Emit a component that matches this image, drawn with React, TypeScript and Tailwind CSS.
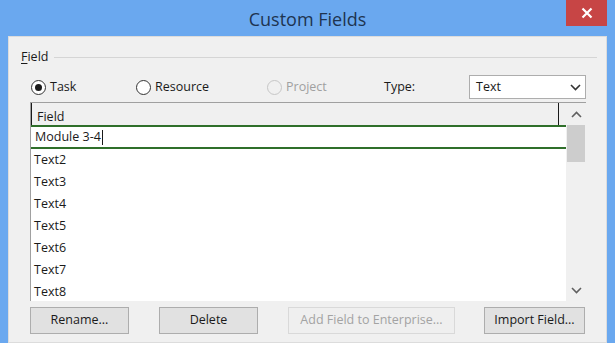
import React from 'react';

const font = { fontFamily: '"Open Sans", "Noto Sans", "Liberation Sans", sans-serif' };

const rows = ['Text2', 'Text3', 'Text4', 'Text5', 'Text6', 'Text7', 'Text8'];

const Radio = (props: { checked?: boolean; disabled?: boolean; label: string; className?: string }) => (
  <div className={`flex items-center gap-[4px] ${props.className ?? ''}`}>
    <div
      className={`w-[15px] h-[15px] rounded-full border flex items-center justify-center ${
        props.disabled ? 'border-[#c6c6c6] bg-[#f0f0f0]' : 'border-[#333333] bg-white'
      }`}
    >
      {props.checked && <div className="w-[7px] h-[7px] rounded-full bg-[#1a1a1a]" />}
    </div>
    <span className={props.disabled ? 'text-[#a0a0a0]' : 'text-[#1a1a1a]'}>{props.label}</span>
  </div>
);

const Button = (props: { label: string; width: string; disabled?: boolean }) => (
  <div
    className={`h-[27px] ${props.width} flex items-center justify-center border ${
      props.disabled ? 'border-[#d9d9d9] bg-[#efefef] text-[#a3a3a3]' : 'border-[#adadad] bg-[#e1e1e1] text-[#1a1a1a]'
    }`}
  >
    {props.label}
  </div>
);

const Chevron = (props: { up?: boolean; color?: string }) => (
  <svg width="11" height="7" viewBox="0 0 11 7">
    <path
      d={props.up ? 'M1 6 L5.5 1.5 L10 6' : 'M1 1 L5.5 5.5 L10 1'}
      fill="none"
      stroke={props.color ?? '#606060'}
      strokeWidth="1.6"
    />
  </svg>
);

export default function App() {
  return (
    <div className="w-[615px] h-[343px] bg-[#6aa8ef] flex flex-col overflow-hidden text-[12.5px]" style={font}>
      {/* Title bar */}
      <div className="h-[36px] flex shrink-0 relative">
        <div className="flex-1 flex items-center justify-center pt-[2px] text-[18px] text-[#1e3450]">Custom Fields</div>
        <div className="absolute right-[8px] top-0 w-[41px] h-[26px] bg-[#c74545] flex items-center justify-center">
          <svg width="12" height="12" viewBox="0 0 12 12">
            <path d="M1.5 1.5 L10.5 10.5 M10.5 1.5 L1.5 10.5" stroke="#ffffff" strokeWidth="2.2" />
          </svg>
        </div>
      </div>

      {/* Client area */}
      <div className="mx-[8px] flex-1 bg-[#f0f0f0] border border-[#dcdcdc] flex flex-col">
        {/* Group label */}
        <div className="flex items-center mt-[10px] ml-[12px] mr-[9px] h-[20px]">
          <span className="text-[#1a1a1a]">
            <span className="underline underline-offset-2">F</span>ield
          </span>
          <div className="flex-1 h-px bg-[#d5d5d5] ml-[6px]" />
        </div>

        {/* Radios + type */}
        <div className="flex items-center h-[24px] mt-[8px]">
          <Radio checked label="Task" className="ml-[22px] w-[105px]" />
          <Radio label="Resource" className="w-[131px]" />
          <Radio disabled label="Project" className="w-[117px]" />
          <span className="text-[#1a1a1a] w-[85px]">Type:</span>
          <div className="w-[117px] h-[24px] bg-white border border-[#adadad] flex items-center justify-between pl-[6px] pr-[4px]">
            <span className="text-[#1a1a1a]">Text</span>
            <Chevron color="#333333" />
          </div>
        </div>

        {/* List */}
        <div className="ml-[21px] mt-[3px] w-[556px] h-[199px] border-t border-l border-[#a0a0a0] flex">
          <div className="flex-1 flex flex-col bg-white">
            <div className="h-[22px] bg-[#f0f0f0] flex items-stretch shrink-0">
              <div className="w-px bg-[#1a1a1a]" />
              <span className="ml-[5px] pt-[6px] leading-[16px] text-[#1a1a1a] w-[521px]">Field</span>
              <div className="w-px bg-[#1a1a1a]" />
            </div>
            <div className="h-[24px] border-y-2 border-[#2f6f2a] flex items-center pl-[4px] text-[#1a1a1a] shrink-0">
              Module 3-4<span className="w-px h-[15px] bg-[#1a1a1a] ml-px" />
            </div>
            {rows.map((r) => (
              <div key={r} className="h-[22px] flex items-center pl-[3px] text-[#1a1a1a] shrink-0">
                {r}
              </div>
            ))}
          </div>
          <div className="w-[20px] bg-[#f0f0f0] flex flex-col">
            <div className="h-[22px] flex items-center justify-center">
              <Chevron up />
            </div>
            <div className="h-[37px] mx-[1px] bg-[#cdcdcd]" />
            <div className="flex-1" />
            <div className="h-[22px] flex items-center justify-center">
              <Chevron />
            </div>
          </div>
        </div>

        {/* Buttons */}
        <div className="flex mt-[6px] ml-[21px]">
          <Button label="Rename..." width="w-[99px]" />
          <div className="w-[30px]" />
          <Button label="Delete" width="w-[99px]" />
          <div className="w-[30px]" />
          <Button label="Add Field to Enterprise..." width="w-[167px]" disabled />
          <div className="w-[29px]" />
          <Button label="Import Field..." width="w-[101px]" />
        </div>
      </div>
    </div>
  );
}
